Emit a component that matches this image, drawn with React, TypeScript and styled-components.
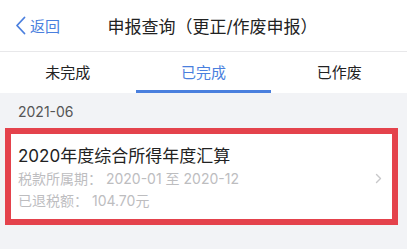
import React from "react";
import styled, { createGlobalStyle } from "styled-components";

const GlobalStyle = createGlobalStyle`
  html, body {
    margin: 0;
    padding: 0;
    background: #f2f3f6;
  }
  body {
    font-family: Inter, "Noto Sans CJK SC", sans-serif;
  }
`;

const Page = styled.div`
  width: 407px;
  height: 249px;
  background: #f2f3f6;
  overflow: hidden;
`;

const Header = styled.div`
  position: relative;
  height: 51px;
  display: flex;
  align-items: center;
  justify-content: center;
  background: #fff;
  border-bottom: 1px solid #e8e8ea;
`;

const Back = styled.div`
  position: absolute;
  left: 15px;
  top: 0;
  bottom: 0;
  display: flex;
  align-items: center;
  gap: 4px;
  color: #4a7fde;
  font-size: 15px;
`;

const Title = styled.div`
  font-size: 17px;
  color: #222;
  padding-left: 18px;
`;

const Tabs = styled.div`
  display: grid;
  grid-template-columns: repeat(3, 1fr);
  height: 41px;
  background: #fff;
`;

const Tab = styled.div<{ $active?: boolean }>`
  display: flex;
  align-items: center;
  justify-content: center;
  font-size: 15px;
  color: ${(p) => (p.$active ? "#4a7fde" : "#222")};
  border-bottom: 3px solid ${(p) => (p.$active ? "#4a7fde" : "transparent")};
  box-sizing: border-box;
`;

const DateRow = styled.div`
  padding: 9px 18px 0;
  height: 26px;
  font-size: 14px;
  line-height: 20px;
  color: #555;
`;

const Card = styled.div`
  margin: 0 9px 0 5px;
  border: 6px solid #e4424c;
  background: #fff;
  display: flex;
  align-items: center;
  padding: 9px 10px 6px 7px;
  box-sizing: border-box;
  height: 97px;
`;

const CardBody = styled.div`
  flex: 1;
  display: flex;
  flex-direction: column;
`;

const CardTitle = styled.div`
  font-size: 17px;
  color: #222;
  line-height: 24px;
`;

const CardLine = styled.div`
  font-size: 14px;
  color: #bdbdbf;
  line-height: 22px;
`;

export default function App() {
  return (
    <Page>
      <GlobalStyle />
      <Header>
        <Back>
          <svg width="11" height="19" viewBox="0 0 11 19">
            <path d="M9.5 1.5 L2 9.5 L9.5 17.5" fill="none" stroke="#4a7fde" strokeWidth="1.8" strokeLinecap="round" strokeLinejoin="round" />
          </svg>
          <span>返回</span>
        </Back>
        <Title>申报查询（更正/作废申报）</Title>
      </Header>
      <Tabs>
        <Tab>未完成</Tab>
        <Tab $active>已完成</Tab>
        <Tab>已作废</Tab>
      </Tabs>
      <DateRow>2021-06</DateRow>
      <Card>
        <CardBody>
          <CardTitle>2020年度综合所得年度汇算</CardTitle>
          <CardLine>税款所属期： 2020-01 至 2020-12</CardLine>
          <CardLine>已退税额： 104.70元</CardLine>
        </CardBody>
        <svg width="7" height="11" viewBox="0 0 7 11">
          <path d="M1.5 1.5 L5.5 5.5 L1.5 9.5" fill="none" stroke="#c8c8ca" strokeWidth="1.4" strokeLinecap="round" strokeLinejoin="round" />
        </svg>
      </Card>
    </Page>
  );
}
